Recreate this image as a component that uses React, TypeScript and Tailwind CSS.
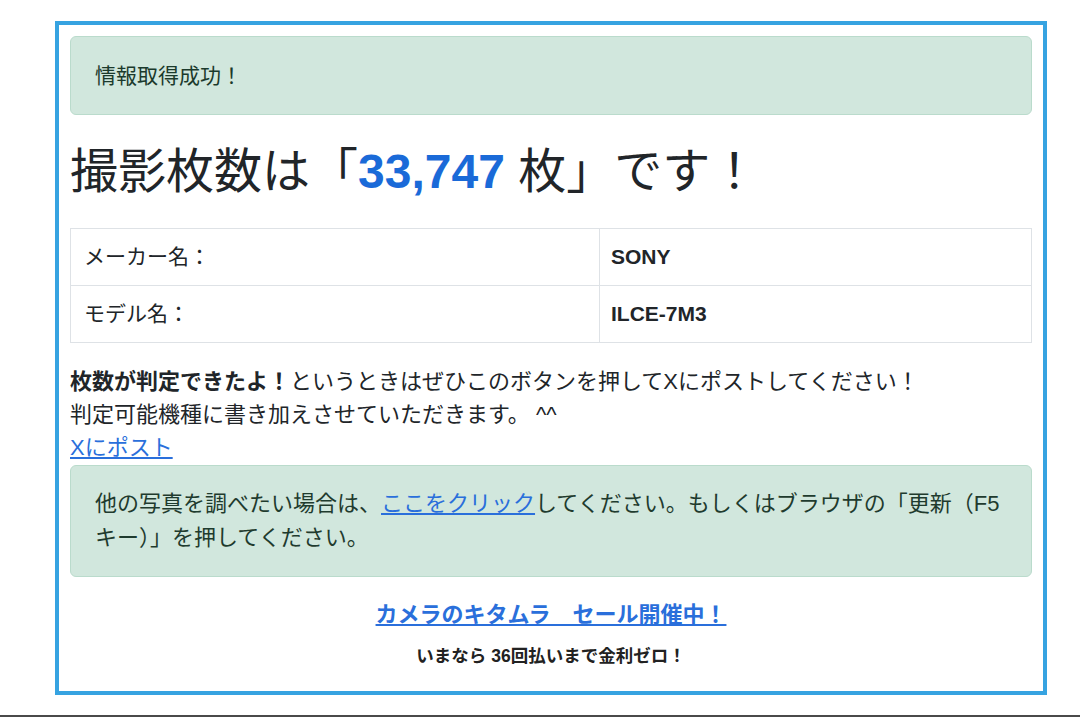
export default function App() {
  return (
    <div className="min-h-screen bg-white pt-[21px] font-['Liberation_Sans','Noto_Sans_CJK_JP',sans-serif] text-[#212529]">
      <div className="ml-[55px] flex h-[674px] w-[992px] flex-col border-4 border-[#36a3e1] px-[11px] pt-[11px]">
        <div className="rounded-md border border-[#badbcc] bg-[#d1e7dd] px-[24px] py-[23px] text-[21px] leading-[31px] text-[#1b3a2c]">
          情報取得成功！
        </div>

        <h1 className="mt-[29px] text-[48px] leading-[55px] font-normal">
          撮影枚数は「<span className="font-bold text-[#1a6ad8]">33,747</span> 枚」です！
        </h1>

        <table className="mt-[29px] w-full border-collapse text-[21px]">
          <tbody>
            <InfoRow label="メーカー名：" value="SONY" />
            <InfoRow label="モデル名：" value="ILCE-7M3" />
          </tbody>
        </table>

        <div className="mt-[22px] text-[22px] leading-[33px]">
          <p>
            <b>枚数が判定できたよ！</b>というときはぜひこのボタンを押してXにポストしてください！
            <br />
            判定可能機種に書き加えさせていただきます。 ^^
          </p>
          <a href="#" className="text-[#2a6fdb] underline underline-offset-2">
            Xにポスト
          </a>
        </div>

        <div className="mt-[1px] rounded-md border border-[#badbcc] bg-[#d1e7dd] px-[24px] py-[21px] text-[22px] leading-[34px] text-[#1f3b2e]">
          他の写真を調べたい場合は、
          <a href="#" className="text-[#2a6fdb] underline underline-offset-2">
            ここをクリック
          </a>
          してください。もしくはブラウザの「更新（F5
          <br />
          キー）」を押してください。
        </div>

        <div className="mt-[21px] text-center">
          <a
            href="#"
            className="text-[22px] leading-[34px] font-bold text-[#2a6fdb] underline underline-offset-2"
          >
            カメラのキタムラ　セール開催中！
          </a>
          <p className="mt-[10px] text-[17.5px] leading-[28px] font-bold text-[#222]">
            いまなら 36回払いまで金利ゼロ！
          </p>
        </div>
      </div>
      <div className="mt-[20px] h-[2px] w-full bg-[#4a4a4a]" />
    </div>
  );
}

function InfoRow({ label, value }: { label: string; value: string }) {
  return (
    <tr>
      <td className="w-[529px] border border-[#dee2e6] px-[13px] py-[12px] leading-[32px]">
        {label}
      </td>
      <td className="border border-[#dee2e6] px-[11px] py-[12px] leading-[32px] font-bold">
        {value}
      </td>
    </tr>
  );
}
